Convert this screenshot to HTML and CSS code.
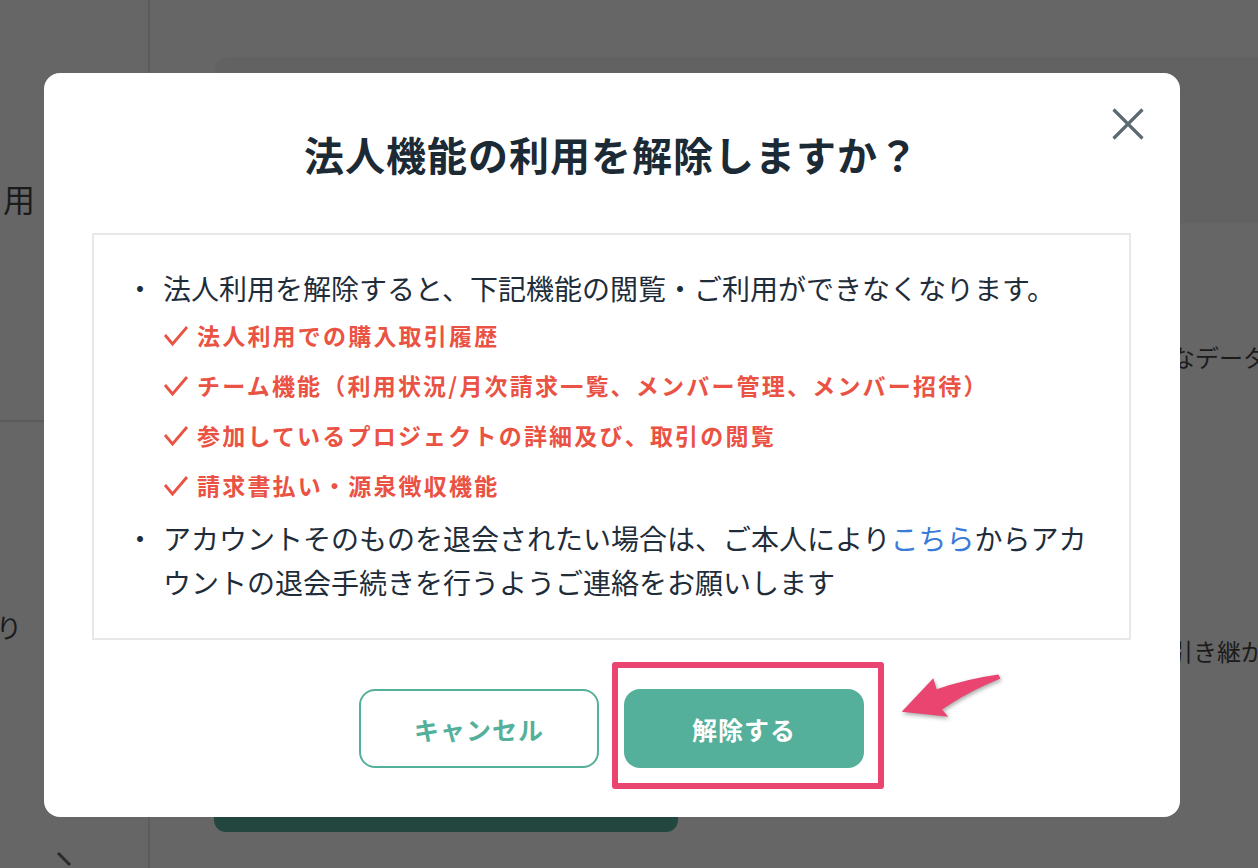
FILE: index.html
```html
<!DOCTYPE html>
<html lang="ja">
<head>
<meta charset="utf-8">
<title>法人機能の利用を解除しますか？</title>
<link rel="stylesheet" href="styles.css">
</head>
<body>
<div class="page">
  <aside class="sidebar">
    <div class="side-text side-yo">用</div>
    <div class="side-divider"></div>
    <div class="side-text side-ri">り</div>
    <svg class="side-chevron" width="20" height="16" viewBox="0 0 20 16"><path d="M2 2 L14 14" stroke="#2b2b2b" stroke-width="3" fill="none"/></svg>
  </aside>
  <main class="main">
    <div class="bg-card"></div>
    <div class="bg-text bg-text-1">なデータを</div>
    <div class="bg-text bg-text-2">引き継がれ</div>
    <div class="bg-button"></div>
  </main>
</div>

<div class="modal">
  <button class="close" aria-label="閉じる">
    <svg width="32" height="32" viewBox="0 0 32 32"><path d="M1.5 1.5 L30.5 30.5 M30.5 1.5 L1.5 30.5" stroke="#5d6a72" stroke-width="3.2" fill="none"/></svg>
  </button>
  <h1 class="title">法人機能の利用を解除しますか？</h1>
  <div class="notice">
    <div class="item">
      <span class="bullet">・</span>
      <span class="item-text">法人利用を解除すると、下記機能の閲覧・ご利用ができなくなります。</span>
    </div>
    <ul class="checks">
      <li class="check-row"><svg class="check" width="26" height="22" viewBox="0 0 26 22"><path d="M2 10 L9.5 19 L24 2" stroke="#ea5243" stroke-width="2.8" fill="none"/></svg><span>法人利用での購入取引履歴</span></li>
      <li class="check-row"><svg class="check" width="26" height="22" viewBox="0 0 26 22"><path d="M2 10 L9.5 19 L24 2" stroke="#ea5243" stroke-width="2.8" fill="none"/></svg><span>チーム機能（利用状況/月次請求一覧、メンバー管理、メンバー招待）</span></li>
      <li class="check-row"><svg class="check" width="26" height="22" viewBox="0 0 26 22"><path d="M2 10 L9.5 19 L24 2" stroke="#ea5243" stroke-width="2.8" fill="none"/></svg><span>参加しているプロジェクトの詳細及び、取引の閲覧</span></li>
      <li class="check-row"><svg class="check" width="26" height="22" viewBox="0 0 26 22"><path d="M2 10 L9.5 19 L24 2" stroke="#ea5243" stroke-width="2.8" fill="none"/></svg><span>請求書払い・源泉徴収機能</span></li>
    </ul>
    <div class="item item-last">
      <span class="bullet">・</span>
      <span class="item-text">アカウントそのものを退会されたい場合は、ご本人により<a class="link" href="#">こちら</a>からアカウントの退会手続きを行うようご連絡をお願いします</span>
    </div>
  </div>
  <div class="actions">
    <button class="btn btn-cancel">キャンセル</button>
    <button class="btn btn-primary">解除する</button>
  </div>
  <div class="highlight"></div>
</div>

<svg class="arrow" width="112" height="56" viewBox="895 668 112 56">
  <path d="M901.7 711.7 L933.3 678.3 L936.7 689.3 Q966 679 998.3 674.5 L1000.5 678.5 Q972 690 951.7 703.3 L942 709.5 L948.3 716.7 Z" fill="#ea4570"/>
</svg>
</body>
</html>
```

FILE: styles.css
```css
* { box-sizing: border-box; }

html, body {
  margin: 0;
  padding: 0;
  width: 1258px;
  height: 868px;
  overflow: hidden;
  background: #666666;
  font-family: "Noto Sans CJK JP", "Noto Sans", sans-serif;
}

.page {
  display: flex;
  width: 1258px;
  height: 868px;
}

.sidebar {
  width: 150px;
  flex: none;
  border-right: 2px solid #5c5c5c;
  display: flex;
  flex-direction: column;
}

.side-text {
  color: #1b1b1b;
  line-height: 1;
}

.side-yo {
  font-size: 32px;
  margin-top: 182px;
  padding-left: 3px;
}

.side-divider {
  height: 2px;
  background: #5c5c5c;
  margin-top: 206px;
}

.side-ri {
  font-size: 26px;
  margin-top: 192px;
  margin-left: -4px;
}

.side-chevron {
  margin-top: 211px;
  margin-left: 56px;
}

.main {
  flex: 1;
  display: flex;
  flex-direction: column;
}

.bg-card {
  margin-top: 57px;
  margin-left: 65px;
  height: 166px;
  background: #626262;
  border-top-left-radius: 14px;
}

.bg-text {
  font-size: 24px;
  line-height: 24px;
  color: #1b1b1b;
  white-space: nowrap;
}

.bg-text-1 {
  margin-top: 122px;
  margin-left: 1021px;
}

.bg-text-2 {
  margin-top: 270px;
  margin-left: 1019px;
}

.bg-button {
  margin-top: 97px;
  margin-left: 64px;
  width: 464px;
  height: 72px;
  background: #23473f;
  border-radius: 0 0 12px 12px;
}

/* modal */
.modal {
  position: fixed;
  left: 44px;
  top: 73px;
  width: 1136px;
  height: 744px;
  background: #ffffff;
  border-radius: 16px;
  padding: 52px 49px 49px 48px;
  display: flex;
  flex-direction: column;
}

.close {
  position: absolute;
  right: 36px;
  top: 35px;
  width: 32px;
  height: 32px;
  padding: 0;
  border: none;
  background: none;
}

.close svg { display: block; }

.title {
  margin: 0;
  font-size: 40px;
  line-height: 58px;
  font-weight: 700;
  color: #1c2a35;
  text-align: center;
  letter-spacing: 1px;
}

.notice {
  margin-top: 50px;
  border: 2px solid #e6e8e9;
  padding: 31px 30px 34px 32px;
  color: #1f2d3a;
}

.item {
  display: flex;
  font-size: 28px;
  line-height: 44px;
}

.bullet {
  width: 37px;
  flex: none;
}

.item-last {
  margin-top: 6px;
}

.link {
  color: #3b7bd8;
  text-decoration: none;
}

.checks {
  list-style: none;
  margin: 0;
  padding: 0 0 0 37px;
}

.check-row {
  display: flex;
  align-items: center;
  height: 50px;
  color: #ea5243;
  font-size: 23px;
  font-weight: 700;
  letter-spacing: 2.2px;
}

.check {
  flex: none;
  margin-right: 8px;
  margin-top: 1px;
}

.actions {
  margin-top: 49px;
  display: flex;
  justify-content: center;
  gap: 25px;
}

.btn {
  width: 240px;
  height: 79px;
  border-radius: 16px;
  font-family: "Noto Sans CJK JP", "Noto Sans", sans-serif;
  font-size: 25px;
  font-weight: 700;
  letter-spacing: 1px;
  padding: 0;
}

.btn-cancel {
  background: #ffffff;
  border: 2px solid #55b09b;
  color: #55b09b;
}

.btn-primary {
  background: #55b09b;
  border: none;
  color: #ffffff;
}

.highlight {
  position: absolute;
  left: 568px;
  top: 589px;
  width: 272px;
  height: 127px;
  border: 6px solid #ea4570;
  border-radius: 3px;
  pointer-events: none;
}

.arrow {
  position: fixed;
  left: 895px;
  top: 668px;
  filter: drop-shadow(1px 2px 2px rgba(0, 0, 0, 0.35));
}
```
